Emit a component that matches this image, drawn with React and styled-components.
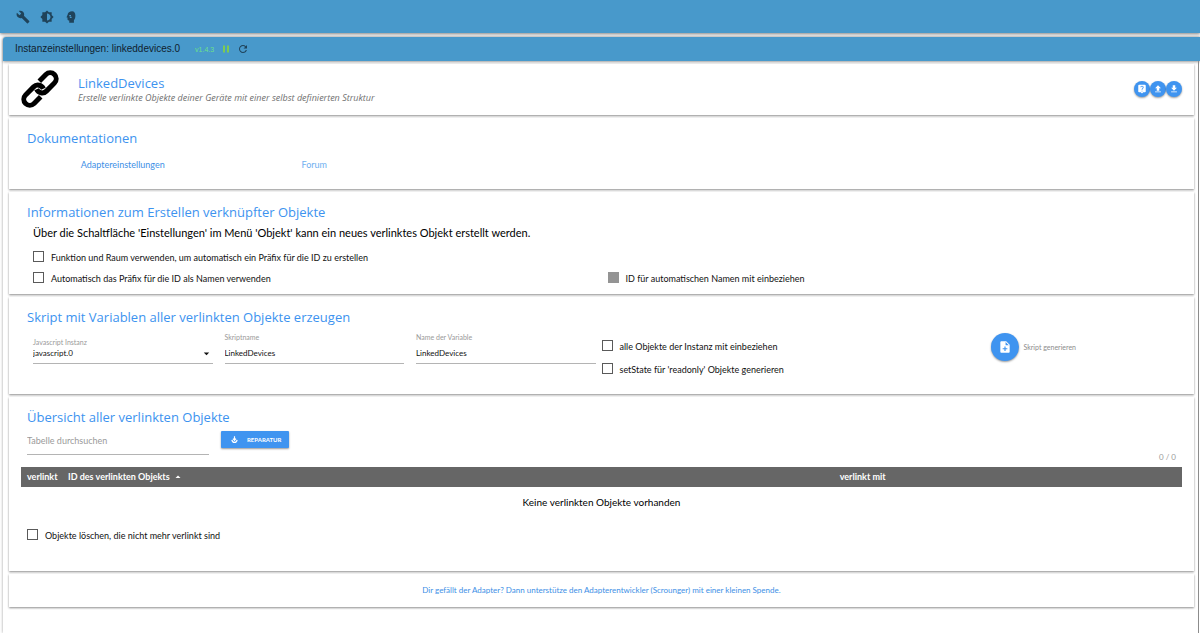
import React from 'react';
import styled, { createGlobalStyle } from 'styled-components';
import {
  MdBuild,
  MdBrightness6,
  MdPause,
  MdRefresh,
  MdLiveHelp,
  MdFileUpload,
  MdFileDownload,
  MdNoteAdd,
  MdArrowDropDown,
  MdArrowDropUp,
} from 'react-icons/md';

//Styles

const GlobalStyle = createGlobalStyle`
  * {
    box-sizing: border-box;
  }

  body {
    margin: 0;
    background: #fff;
    color: #111;
    font-family: Lato, 'Open Sans', sans-serif;
    font-size: 9px;
    line-height: 12px;
  }

  button, input, select {
    font-family: inherit;
  }
`

const Page = styled.div`
  min-height: 100vh;
  display: flex;
  flex-direction: column;
  gap: 4px;
`

const Toolbar = styled.header`
  height: 33px;
  padding: 0 16px;
  display: flex;
  align-items: center;
  gap: 10px;
  background: #4899cb;
  box-shadow: 0 1px 3px rgba(0, 0, 0, 0.5);
`

const ToolButton = styled.button`
  display: flex;
  padding: 0;
  border: 0;
  background: none;
  color: ${props => props.$color || '#1f435a'};
  font-size: ${props => props.$size || '14px'};
`

const Dialog = styled.main`
  flex: 1;
  margin-left: 3px;
  border-radius: 3px 0 0 0;
  box-shadow: 0 0 3px rgba(0, 0, 0, 0.4);
`

const TitleBar = styled.div`
  height: 24px;
  padding: 0 12px;
  display: flex;
  align-items: center;
  background: #4899cb;
  border-radius: 3px 0 0 0;
  box-shadow: 0 1px 3px rgba(0, 0, 0, 0.4);
`

const DialogTitle = styled.h1`
  margin: 0 15px 0 0;
  font: 10px/12px 'Liberation Sans', sans-serif;
  color: #10222e;
`

const Version = styled.span`
  margin-right: 6px;
  padding-top: 1px;
  font: 7px/8px 'Liberation Sans', sans-serif;
  color: #6be08a;
`

const TitleIcons = styled.div`
  display: flex;
  gap: 5px;
`

const Content = styled.div`
  margin-right: 1px;
  padding: 3px 4px 3px 6px;
  display: flex;
  flex-direction: column;
  gap: 3px;
  border-right: 1px solid #8c8c8c;
  min-height: calc(100vh - 61px);
`

const Card = styled.section`
  padding: ${props => props.$pad};
  background: #fff;
  box-shadow: 0 1px 2px rgba(0, 0, 0, 0.45);
`

const AdapterHeader = styled(Card)`
  display: flex;
  align-items: center;
`

const AdapterLogo = styled.svg`
  width: 38px;
  height: 38px;
  margin-right: 19px;
  fill: none;
  stroke: #000;
  stroke-width: 5;
`

const AdapterText = styled.div`
  flex: 1;
`

const Heading = styled.h2`
  margin: 0;
  font: 13px/18px 'Open Sans', sans-serif;
  color: #3d93ef;
`

const Subtitle = styled.p`
  margin: 0;
  font: italic 9px/12px 'Open Sans', sans-serif;
  color: #707070;
`

const RoundButtons = styled.div`
  display: flex;
`

const RoundButton = styled.button`
  width: ${props => props.$size};
  height: ${props => props.$size};
  padding: 0;
  display: flex;
  align-items: center;
  justify-content: center;
  border: 0;
  border-radius: 50%;
  background: #3f94f0;
  color: #fff;
  font-size: ${props => props.$iconSize};
  box-shadow: 0 1px 2px rgba(0, 0, 0, 0.4);
`

const LinkRow = styled.nav`
  display: grid;
  grid-template-columns: repeat(6, 1fr);
  margin-top: 12px;
  text-align: center;
`

const Link = styled.a`
  color: ${props => props.$soft ? '#6eaff0' : '#3d8fe6'};
  font-size: ${props => props.$small ? '8px' : '9px'};
  text-decoration: none;
`

const Hint = styled.p`
  margin: 5px 6px 11px;
  font-size: 11px;
  line-height: 14px;
  color: #000;
`

const CheckGrid = styled.div`
  display: grid;
  grid-template-columns: 1fr 1fr;
  row-gap: 8px;
`

const CheckLabel = styled.label`
  grid-column-start: ${props => props.$column};
  padding: 0 6px;
  display: flex;
  align-items: flex-start;
  gap: 7px;

  span {
    padding-top: 1px;
  }
`

const Check = styled.input`
  appearance: none;
  width: 11px;
  height: 11px;
  margin: 0;
  border: 1px solid #5a5a5a;

  &:disabled {
    border-color: #949494;
    background: #949494;
  }
`

const ScriptRow = styled.div`
  margin-top: 7px;
  display: grid;
  grid-template-columns: repeat(12, 1fr);
  align-items: start;
`

const Field = styled.label`
  grid-column: span 2;
  height: 31px;
  margin: 0 6px;
  padding-top: ${props => props.$top || '0'};
  display: flex;
  flex-direction: column;
  border-bottom: 1px solid #b4b4b4;
  font-size: 7px;
  line-height: 9px;
  color: #9a9a9a;
`

const TextInput = styled.input`
  width: 100%;
  height: 21px;
  padding: 0;
  border: 0;
  outline: 0;
  background: none;
  font-size: 8px;
  color: #111;
`

const SelectBox = styled.div`
  display: flex;
  align-items: center;
  height: 12px;
  font-size: 13px;
  color: #111;
`

const Select = styled.select`
  appearance: none;
  flex: 1;
  height: 12px;
  padding: 0;
  border: 0;
  outline: 0;
  background: none;
  font-size: 8px;
  line-height: 12px;
  color: #111;
`

const ScriptChecks = styled.div`
  grid-column: span 4;
  padding-top: 7px;
  display: flex;
  flex-direction: column;
  gap: 10px;

  label {
    padding: 0;
  }
`

const Generate = styled.label`
  grid-column: span 2;
  padding-left: 6px;
  display: flex;
  align-items: center;
  gap: 5px;
  font-size: 7px;
  color: #8c8c8c;
`

const TableTools = styled.div`
  display: flex;
  align-items: flex-start;
  gap: 12px;
  margin: 5px 0;
`

const Search = styled.input`
  width: 182px;
  height: 24px;
  padding: 0 0 5px;
  border: 0;
  border-bottom: 1px solid #b4b4b4;
  outline: 0;
  font-size: 9px;

  &::placeholder {
    color: #9a9a9a;
  }
`

const RepairButton = styled.button`
  height: 17px;
  padding: 0 8px 0 10px;
  display: flex;
  align-items: center;
  gap: 9px;
  border: 0;
  border-radius: 1px;
  background: #3f94f0;
  color: #fff;
  font-size: 6px;
  font-weight: bold;
  box-shadow: 0 1px 2px rgba(0, 0, 0, 0.4);
`

const Counter = styled.div`
  margin-left: auto;
  padding-top: 21px;
  font-size: 8px;
  line-height: 10px;
  color: #9a9a9a;
`

const TableArea = styled.div`
  margin: 0 -6px;
`

const Table = styled.table`
  width: 100%;
  table-layout: fixed;
  border-collapse: collapse;
`

const HeadCell = styled.th`
  width: ${props => props.$width};
  height: 20px;
  padding: 0 0 0 6px;
  background: #666;
  color: #fff;
  text-align: left;
  white-space: nowrap;
`

const SortLabel = styled.span`
  display: flex;
  align-items: center;
  gap: 2px;

  svg {
    font-size: 12px;
  }
`

const EmptyCell = styled.td`
  height: 30px;
  padding: 0;
  font-size: 10px;
  text-align: center;
  color: #000;
`

const DeleteRow = styled.div`
  padding-top: 12px;
`

const Donate = styled(Card)`
  text-align: center;
`

const HeadIcon = () => (
  <svg width="14" height="14" viewBox="0 0 24 24" fill="currentColor">
    <path d="M14 2C9.500 2 6.500 4 6.200 8L4.500 12c-.2.500.1 1 .700 1H6v3c0 1.200.800 2 2 2h1v4h8v-4.500c1.800-2 2.500-4.500 2.500-8C19.500 5 17.500 2 14 2z" />
    <path d="M9 9.500h3M10 12.500h3" stroke="#4899cb" strokeWidth="2" />
  </svg>
)

const ChainIcon = () => (
  <AdapterLogo viewBox="-19 -19 38 38">
    <g transform="rotate(-45)">
      <path d="M-5 6H-14.400A6 6 0 0 1 -14.400 -6H-3A6 6 0 0 1 2.600 2.200" />
      <path d="M5 -6H14.400A6 6 0 0 1 14.400 6H3A6 6 0 0 1 -2.600 -2.200" />
    </g>
  </AdapterLogo>
)

const RepairIcon = () => (
  <svg width="7" height="7" viewBox="0 0 24 24" fill="none" stroke="currentColor" strokeWidth="4">
    <path d="M12 1v13M7 9l5 6 5-6" />
    <path d="M3 13c1 6 5 9 9 9s8-3 9-9" />
  </svg>
)

const CheckField = ({ text, column, disabled }) => (
  <CheckLabel $column={column}>
    <Check type="checkbox" disabled={disabled} />
    <span>{text}</span>
  </CheckLabel>
)

class App extends React.Component {

  state = {
    scriptName: 'LinkedDevices',
    variableName: 'LinkedDevices',
    search: '',
  }

  onChangeScriptName = (event) => {
    this.setState({ scriptName: event.target.value })
  }

  onChangeVariableName = (event) => {
    this.setState({ variableName: event.target.value })
  }

  onChangeSearch = (event) => {
    this.setState({ search: event.target.value })
  }

  render() {
    return (
      <Page>
        <GlobalStyle />
        <Toolbar>
          <ToolButton><MdBuild /></ToolButton>
          <ToolButton><MdBrightness6 /></ToolButton>
          <ToolButton><HeadIcon /></ToolButton>
        </Toolbar>

        <Dialog>
          <TitleBar>
            <DialogTitle>Instanzeinstellungen: linkeddevices.0</DialogTitle>
            <Version>v1.4.3</Version>
            <TitleIcons>
              <ToolButton $size="12px" $color="#7ccb52"><MdPause /></ToolButton>
              <ToolButton $size="12px"><MdRefresh /></ToolButton>
            </TitleIcons>
          </TitleBar>

          <Content>
            <AdapterHeader $pad="6px 12px 7px">
              <ChainIcon />
              <AdapterText>
                <Heading>LinkedDevices</Heading>
                <Subtitle>Erstelle verlinkte Objekte deiner Geräte mit einer selbst definierten Struktur</Subtitle>
              </AdapterText>
              <RoundButtons>
                <RoundButton $size="16px" $iconSize="10px"><MdLiveHelp /></RoundButton>
                <RoundButton $size="16px" $iconSize="10px"><MdFileUpload /></RoundButton>
                <RoundButton $size="16px" $iconSize="10px"><MdFileDownload /></RoundButton>
              </RoundButtons>
            </AdapterHeader>

            <Card $pad="11px 18px 18px">
              <Heading>Dokumentationen</Heading>
              <LinkRow>
                <Link href="#adapter">Adaptereinstellungen</Link>
                <Link href="#forum" $soft>Forum</Link>
              </LinkRow>
            </Card>

            <Card $pad="11px 18px 9px">
              <Heading>Informationen zum Erstellen verknüpfter Objekte</Heading>
              <Hint>Über die Schaltfläche 'Einstellungen' im Menü 'Objekt' kann ein neues verlinktes Objekt erstellt werden.</Hint>
              <CheckGrid>
                <CheckField column={1} text="Funktion und Raum verwenden, um automatisch ein Präfix für die ID zu erstellen" />
                <CheckField column={1} text="Automatisch das Präfix für die ID als Namen verwenden" />
                <CheckField column={2} disabled text="ID für automatischen Namen mit einbeziehen" />
              </CheckGrid>
            </Card>

            <Card $pad="11px 18px 18px">
              <Heading>Skript mit Variablen aller verlinkten Objekte erzeugen</Heading>
              <ScriptRow>
                <Field $top="5px">
                  Javascript Instanz
                  <SelectBox>
                    <Select>
                      <option>javascript.0</option>
                    </Select>
                    <MdArrowDropDown />
                  </SelectBox>
                </Field>
                <Field>
                  Skriptname
                  <TextInput value={this.state.scriptName} onChange={this.onChangeScriptName} />
                </Field>
                <Field>
                  Name der Variable
                  <TextInput value={this.state.variableName} onChange={this.onChangeVariableName} />
                </Field>
                <ScriptChecks>
                  <CheckField text="alle Objekte der Instanz mit einbeziehen" />
                  <CheckField text="setState für 'readonly' Objekte generieren" />
                </ScriptChecks>
                <Generate>
                  <RoundButton $size="28px" $iconSize="14px"><MdNoteAdd /></RoundButton>
                  Skript generieren
                </Generate>
              </ScriptRow>
            </Card>

            <Card $pad="11px 18px 29px">
              <Heading>Übersicht aller verlinkten Objekte</Heading>
              <TableTools>
                <Search placeholder="Tabelle durchsuchen" aria-label="Tabelle durchsuchen" value={this.state.search} onChange={this.onChangeSearch} />
                <RepairButton><RepairIcon />REPARATUR</RepairButton>
                <Counter>0 / 0</Counter>
              </TableTools>
              <TableArea>
                <Table>
                  <thead>
                    <tr>
                      <HeadCell $width="41px">verlinkt</HeadCell>
                      <HeadCell><SortLabel>ID des verlinkten Objekts<MdArrowDropUp /></SortLabel></HeadCell>
                      <HeadCell $width="30%">verlinkt mit</HeadCell>
                    </tr>
                  </thead>
                  <tbody>
                    <tr>
                      <EmptyCell colSpan={3}>Keine verlinkten Objekte vorhanden</EmptyCell>
                    </tr>
                  </tbody>
                </Table>
                <DeleteRow>
                  <CheckField text="Objekte löschen, die nicht mehr verlinkt sind" />
                </DeleteRow>
              </TableArea>
            </Card>

            <Donate $pad="10px 18px 11px">
              <Link href="#donate" $small>Dir gefällt der Adapter? Dann unterstütze den Adapterentwickler (Scrounger) mit einer kleinen Spende.</Link>
            </Donate>
          </Content>
        </Dialog>
      </Page>
    );
  }
}

export default App;
